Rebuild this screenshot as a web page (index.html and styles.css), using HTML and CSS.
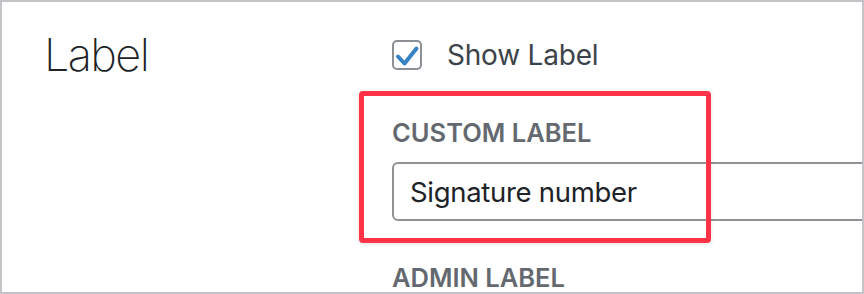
FILE: index.html
```html
<!DOCTYPE html>
<html lang="en">
<head>
    <meta charset="UTF-8">
    <meta name="viewport" content="width=device-width, initial-scale=1.0">
    <title>Field Settings - Label</title>
    <link rel="stylesheet" href="styles.css">
</head>
<body>
    <div class="settings-frame">
        <div class="settings-row">
            <h2 class="settings-title">Label</h2>
            <div class="settings-fields">
                <label class="check-row">
                    <span class="check-box">
                        <svg width="26" height="26" viewBox="0 0 26 26">
                            <polyline points="4,14.5 10.5,21.5 22.5,6.5" fill="none" stroke="#3582c4" stroke-width="4" stroke-linecap="round" stroke-linejoin="round"/>
                        </svg>
                    </span>
                    <span class="check-text">Show Label</span>
                </label>

                <div class="field-group">
                    <div class="field-label">Custom Label</div>
                    <input class="text-input" type="text" value="Signature number">
                    <!-- annotation box drawn over the field -->
                    <div class="highlight"></div>
                </div>

                <div class="field-group admin">
                    <div class="field-label">Admin Label</div>
                </div>
            </div>
        </div>
    </div>
</body>
</html>
```

FILE: styles.css
```css
body {
    margin: 0;
    padding: 0;
    background: #fff;
    font-family: Inter, "Noto Sans", sans-serif;
}

.settings-frame {
    box-sizing: border-box;
    width: 864px;
    height: 294px;
    border: 2px solid #c3c4c7;
    overflow: hidden;
    background: #fff;
}

.settings-row {
    display: grid;
    grid-template-columns: 390px 1fr;
}

.settings-title {
    margin: 30px 0 0 42px;
    font-size: 45px;
    line-height: 45px;
    font-weight: 200;
    letter-spacing: -1.6px;
    color: #1d2327;
}

.settings-fields {
    padding-top: 38px;
    display: flex;
    flex-direction: column;
}

.check-row {
    display: flex;
    align-items: center;
    gap: 25px;
    height: 30px;
}

.check-box {
    box-sizing: border-box;
    width: 30px;
    height: 30px;
    border: 2px solid #8c8f94;
    border-radius: 5px;
    display: flex;
    align-items: center;
    justify-content: center;
}

.check-text {
    font-size: 28px;
    line-height: 30px;
    letter-spacing: -0.2px;
    color: #3c434a;
}

.field-group {
    position: relative;
    margin-top: 48px;
}

.field-label {
    font-size: 25.5px;
    line-height: 30px;
    font-weight: 600;
    text-transform: uppercase;
    color: #646970;
}

.text-input {
    box-sizing: border-box;
    display: block;
    margin-top: 14px;
    width: 560px;
    height: 59px;
    padding: 0 0 0 16px;
    border: 2px solid #909296;
    border-radius: 6px;
    font-family: inherit;
    font-size: 27.5px;
    letter-spacing: -0.3px;
    color: #1d2327;
    background: #fff;
}

.highlight {
    position: absolute;
    left: -33px;
    top: -27px;
    width: 352px;
    height: 152px;
    box-sizing: border-box;
    border: 5px solid #ff3347;
    border-radius: 4px;
    box-shadow: 0 1px 4px rgba(0, 0, 0, 0.12);
    pointer-events: none;
}

.field-group.admin {
    margin-top: 42px;
}
```
